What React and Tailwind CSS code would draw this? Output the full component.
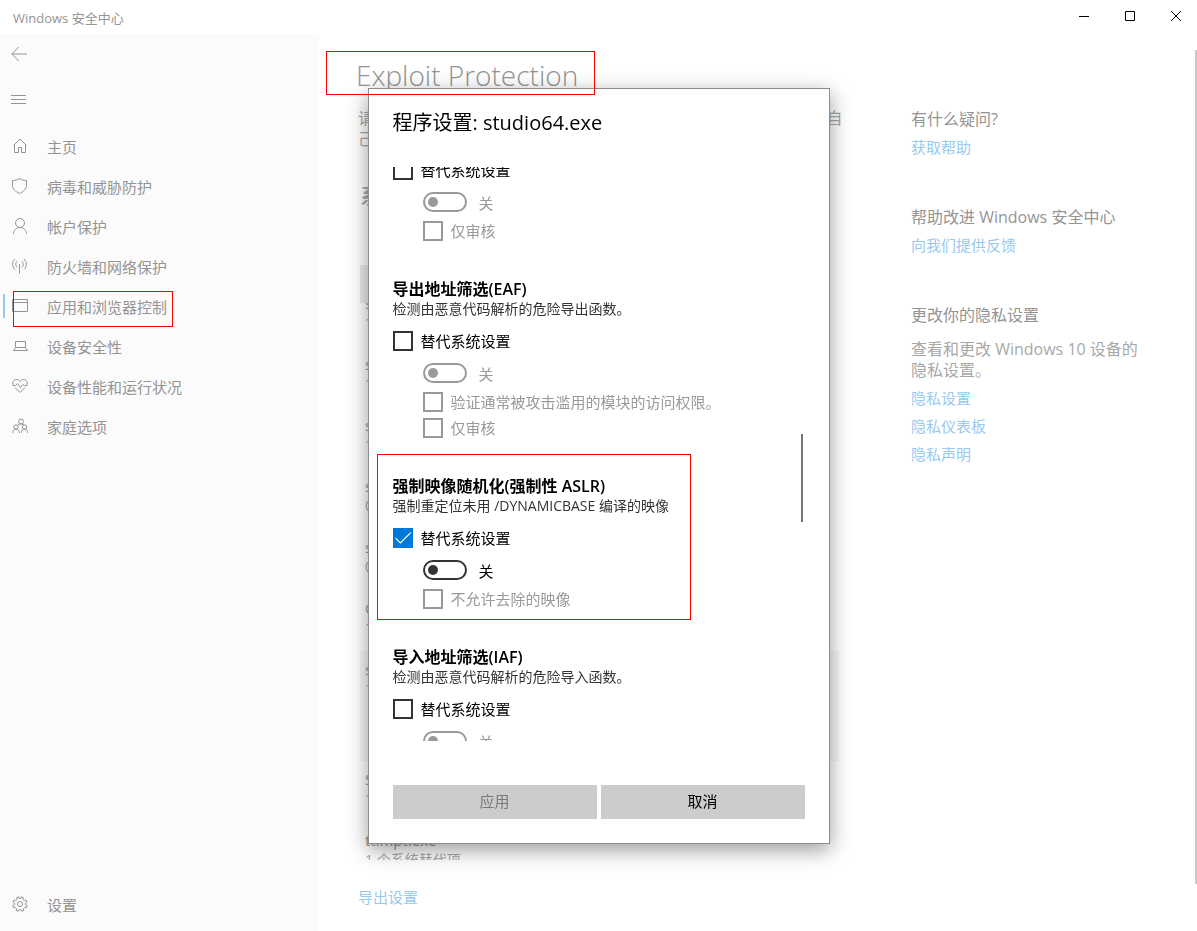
import React from "react";

const latin = "font-['Open_Sans','Noto_Sans_CJK_SC',sans-serif]";

function Icon({ children }) {
  return (
    <svg viewBox="0 0 16 16" className="size-4 shrink-0" fill="none" stroke="currentColor" aria-hidden="true">
      {children}
    </svg>
  );
}

const icons = {
  home: (
    <Icon>
      <path d="M1.5 7.5 8 1l6.500 6.500M2.500 6.800V14.500H6.500V9.500H9.500V14.500H13.500V6.800" />
    </Icon>
  ),
  shield: (
    <Icon>
      <path d="M7.500 .5C5.500 2 3.500 2.500 .5 2.500V7.500C.5 11 3.500 13.500 7.500 15.500 11.500 13.500 14.500 11 14.500 7.500V2.500C11.500 2.500 9.500 2 7.500 .5Z" />
    </Icon>
  ),
  person: (
    <Icon>
      <circle cx="8" cy="5" r="4.500" />
      <path d="M1.500 16C1.500 12 4.500 9.500 8 9.500S14.500 12 14.500 16" />
    </Icon>
  ),
  signal: (
    <Icon>
      <path d="M7.500 6V15.500M3 1C-.2 4 -.2 8.500 3 11.500M12 1C15.200 4 15.200 8.500 12 11.500M5.300 3C3.200 5 3.200 7.500 5.300 9.500M9.700 3C11.800 5 11.800 7.500 9.700 9.500" />
    </Icon>
  ),
  window: (
    <Icon>
      <path d="M.5 1.500H15.500V13.500H.5ZM.5 4.500H15.500" />
    </Icon>
  ),
  laptop: (
    <Icon>
      <path d="M3.500 3.500H13.500V9.500H3.500ZM3.500 9.500 1.500 12.500H15.500L13.500 9.500" />
    </Icon>
  ),
  heart: (
    <Icon>
      <path d="M1.300 7.500C-.5 4 2 1.500 4.500 1.500 6.300 1.500 7.500 2.500 8 3.500 8.500 2.500 9.700 1.500 11.500 1.500 14 1.500 16.500 4 14.700 7.500M3 9.500 8 14.500 13 9.500M.8 7.500H3.500L5.500 5.500 8.500 9.500 11 6.500 12.500 7.500H15.200" />
    </Icon>
  ),
  family: (
    <Icon>
      <circle cx="9" cy="3.500" r="2.500" />
      <circle cx="4" cy="9" r="2.200" />
      <circle cx="12.500" cy="9" r="2.200" />
      <path d="M.6 15C.8 12.500 2 11.200 4 11.200S7.200 12.500 7.400 15M9.300 15C9.500 12.500 10.500 11.200 12.500 11.200S15.600 12.500 15.700 15M5.500 7.500C6 6.500 7.500 6 9 6S11.500 6.500 12 7" />
    </Icon>
  ),
  gear: (
    <Icon>
      <circle cx="8" cy="8" r="2.500" />
      <path d="M6.800 .8 7.200 2.500H8.800L9.200 .8 11.300 1.600 10.800 3.300 12.300 4.700 14 3.900 15.100 6 13.600 7V8.800L15.200 9.700 14.300 11.900 12.600 11.500 11.400 12.700 11.900 14.400 9.800 15.300 8.800 13.700H7.200L6.200 15.300 4.100 14.400 4.600 12.700 3.400 11.500 1.700 11.900 .8 9.700 2.400 8.800V7L.9 6 2 3.900 3.700 4.700 5.200 3.300 4.700 1.600Z" />
    </Icon>
  ),
};

const navItems = [
  ["home", "主页"],
  ["shield", "病毒和威胁防护"],
  ["person", "帐户保护"],
  ["signal", "防火墙和网络保护"],
  ["window", "应用和浏览器控制"],
  ["laptop", "设备安全性"],
  ["heart", "设备性能和运行状况"],
  ["family", "家庭选项"],
];

function NavLink({ icon, label, active }) {
  return (
    <a
      href="#"
      aria-current={active ? "page" : undefined}
      className="relative flex h-10 items-center gap-[19px] pl-3 text-[15px] text-[#949494]"
    >
      {active && <span className="absolute left-[3px] h-6 w-0.5 bg-[#99c9ef]" />}
      {icons[icon]}
      <span className="pt-0.5">{label}</span>
      {active && <span className="absolute top-[5px] left-[13px] h-9 w-40 border border-[#f00]" />}
    </a>
  );
}

function Sidebar() {
  return (
    <aside className="flex w-[319px] shrink-0 flex-col bg-[#fbfbfb] text-[#949494]">
      <button aria-label="返回" className="flex h-10 items-center pl-[11px]">
        <svg viewBox="0 0 16 16" className="size-4" fill="none" stroke="currentColor">
          <path d="M.8 8H16M7.800 1 .8 8l7 7" />
        </svg>
      </button>
      <button aria-label="打开导航" className="mt-1 flex h-11 items-center pl-[11px]">
        <svg viewBox="0 0 15 10" className="h-2.5 w-[15px]" stroke="currentColor">
          <path d="M0 .5H15M0 4.500H15M0 8.500H15" />
        </svg>
      </button>
      <nav className="mt-1 flex flex-1 flex-col">
        {navItems.map(([icon, label]) => (
          <NavLink key={icon} icon={icon} label={label} active={icon === "window"} />
        ))}
        <div className="mt-auto pb-[7px]">
          <NavLink icon="gear" label="设置" />
        </div>
      </nav>
    </aside>
  );
}

const programs = [
  ["sdxhelper.exe", "1 个系统替代项"],
  ["setup.exe", "1 个系统替代项"],
  ["spoolsv.exe", "1 个系统替代项"],
  ["splwow64.exe", "0 个系统替代项"],
  ["svchost.exe", "0 个系统替代项"],
  ["Outlook.exe", "1 个系统替代项"],
  ["studio64.exe", "1 个系统替代项"],
  ["SystemSettings.exe", "1 个系统替代项"],
  ["ttimpt.exe", "1 个系统替代项"],
];

function ProgramList() {
  return (
    <div className="mr-1 ml-0.5 h-[557px] overflow-hidden">
      <ul className="-mt-[18px]">
        {programs.map(([name, note]) => (
          <li
            key={name}
            className={
              name === "studio64.exe"
                ? "h-[110px] bg-[#f7f7f7] px-[5px] pt-2 text-[#949494]"
                : "h-[61px] px-[5px] pt-2 text-[#949494]"
            }
          >
            <p className="text-[15px] leading-5">{name}</p>
            <p className="text-[14px] leading-5 text-[#a8a8a8]">{note}</p>
          </li>
        ))}
      </ul>
    </div>
  );
}

function Content() {
  return (
    <section className="max-w-[485px] flex-1">
      <h1 className="relative -ml-0.5 flex h-[59px] items-end text-[28px] leading-9 font-light text-[#949494]">
        Exploit Protection
        <span className="absolute -left-[30px] top-[17px] z-20 h-11 w-[269px] border border-[#f00]" />
      </h1>
      <p className="mt-[15px] text-[16px] leading-[21px] whitespace-nowrap text-[#a8a8a8]">
        请查看 Windows和程序的 Exploit Protection 设置。你可根据需要自
        <br />
        己自定义设置。
      </p>
      <div className="mx-0.5 mt-7 flex gap-6 text-[22px] leading-[34px] font-medium text-[#a8a8a8]">
        <button>系统设置</button>
        <button>程序设置</button>
      </div>
      <button className="mx-0.5 mt-[53px] block h-[38px] w-[230px] bg-[#ebebeb] text-[15px] text-[#949494]">
        + 添加程序进行自定义
      </button>
      <ProgramList />
      <a href="#" className="mt-[27px] inline-block text-[15px] leading-5 text-[#99c9ef]">
        导出设置
      </a>
    </section>
  );
}

function HelpGroup({ title, note, links }) {
  return (
    <div>
      <h2 className="text-[16px] leading-[21px] text-[#949494]">{title}</h2>
      {note && <p className="mt-[13px] text-[16px] leading-[21px] text-[#a8a8a8]">{note}</p>}
      <ul className="mt-[7px] flex flex-col gap-2 text-[15px] leading-5 text-[#99c9ef]">
        {links.map((link) => (
          <li key={link}>
            <a href="#">{link}</a>
          </li>
        ))}
      </ul>
    </div>
  );
}

function HelpPane() {
  return (
    <aside className="flex w-[240px] shrink-0 flex-col gap-[50px] pt-[75px]">
      <HelpGroup title="有什么疑问?" links={["获取帮助"]} />
      <HelpGroup title="帮助改进 Windows 安全中心" links={["向我们提供反馈"]} />
      <HelpGroup
        title="更改你的隐私设置"
        note="查看和更改 Windows 10 设备的隐私设置。"
        links={["隐私设置", "隐私仪表板", "隐私声明"]}
      />
    </aside>
  );
}

function Check({ label, checked, disabled }) {
  return (
    <label
      className={
        disabled ? "flex h-5 items-center gap-2 text-[#999]" : "flex h-5 items-center gap-2 text-black"
      }
    >
      <span className="grid size-5 shrink-0">
        <input
          type="checkbox"
          defaultChecked={checked}
          disabled={disabled}
          className="peer col-start-1 row-start-1 size-5 appearance-none border-2 border-[#333] bg-white checked:border-[#0078d7] checked:bg-[#0078d7] disabled:border-[#999]"
        />
        <svg
          viewBox="0 0 20 20"
          className="pointer-events-none invisible col-start-1 row-start-1 size-5 peer-checked:visible"
          fill="none"
          stroke="#fff"
          strokeWidth="1.200"
        >
          <path d="M2.500 10.200 7.300 15 17.800 4.600" />
        </svg>
      </span>
      <span className="text-[15px] leading-5">{label}</span>
    </label>
  );
}

function Toggle({ disabled }) {
  return (
    <label
      className={
        disabled ? "flex h-5 items-center gap-3 text-[#999]" : "flex h-5 items-center gap-3 text-black"
      }
    >
      <input
        type="checkbox"
        role="switch"
        disabled={disabled}
        className="flex h-5 w-11 appearance-none items-center rounded-full border-2 border-[#333] pl-[3px] before:size-2.5 before:rounded-full before:bg-[#333] disabled:border-[#999] disabled:before:bg-[#999]"
      />
      <span className="pt-0.5 text-[15px] leading-5">关</span>
    </label>
  );
}

function Mitigation({ title, note, enabled, options, highlighted }) {
  return (
    <section className="relative">
      {title && (
        <div className="mb-3">
          <h3 className="text-[16px] leading-5 font-semibold text-black">{title}</h3>
          <p className="text-[14px] leading-5 text-[#333]">{note}</p>
        </div>
      )}
      <Check label="替代系统设置" checked={enabled} />
      <div className="mt-3 ml-[30px]">
        <Toggle disabled={!enabled} />
        <div className="mt-[9px] flex flex-col gap-1.5">
          {options.map((option) => (
            <Check key={option} label={option} disabled />
          ))}
        </div>
      </div>
      {highlighted && (
        <span className="pointer-events-none absolute -top-[22px] -left-4 h-[166px] w-[314px] border border-[#f00]" />
      )}
    </section>
  );
}

function ProgramDialog() {
  return (
    <div className="fixed inset-0 z-10 flex items-center justify-center">
      <div
        role="dialog"
        aria-labelledby="dialog-title"
        className="flex w-[462px] flex-col border border-[#8c8c8c] bg-white px-6 pb-6 shadow-[0_6px_20px_rgba(0,0,0,0.4)]"
      >
        <h2 id="dialog-title" className="mt-5 text-[20px] leading-7 text-black">
          程序设置: studio64.exe
        </h2>
        <div className="-mx-4 mt-[30px] flex h-[574px] overflow-hidden px-4">
          <div className="-mt-[7px] flex flex-1 flex-col gap-[38px]">
            <Mitigation options={["仅审核"]} />
            <Mitigation
              title="导出地址筛选(EAF)"
              note="检测由恶意代码解析的危险导出函数。"
              options={["验证通常被攻击滥用的模块的访问权限。", "仅审核"]}
            />
            <Mitigation
              title="强制映像随机化(强制性 ASLR)"
              note="强制重定位未用 /DYNAMICBASE 编译的映像"
              enabled
              highlighted
              options={["不允许去除的映像"]}
            />
            <Mitigation
              title="导入地址筛选(IAF)"
              note="检测由恶意代码解析的危险导入函数。"
              options={["仅审核"]}
            />
          </div>
          <div className="mt-[267px] mr-0.5 h-[88px] w-0.5 shrink-0 bg-[#767676]" />
        </div>
        <div className="mt-11 grid grid-cols-2 gap-1 text-[15px]">
          <button disabled className="h-[34px] bg-[#ccc] text-[#7a7a7a]">
            应用
          </button>
          <button className="h-[34px] bg-[#ccc] text-black">取消</button>
        </div>
      </div>
    </div>
  );
}

function TitleBar() {
  return (
    <header className="flex h-[34px] shrink-0 justify-between pl-[13px]">
      <span className="pt-2 text-[13px] leading-5 text-[#949494]">Windows 安全中心</span>
      <div className="flex h-8">
        <button aria-label="最小化" className="grid w-[46px] place-items-center">
          <svg viewBox="0 0 10 10" className="size-2.5" stroke="#000">
            <path d="M0 5.500H10" />
          </svg>
        </button>
        <button aria-label="最大化" className="grid w-[46px] place-items-center">
          <svg viewBox="0 0 10 10" className="size-2.5" fill="none" stroke="#000">
            <path d="M.5 .5H9.500V9.500H.5Z" />
          </svg>
        </button>
        <button aria-label="关闭" className="grid w-11 place-items-center pl-0.5">
          <svg viewBox="0 0 10 10" className="size-2.5" stroke="#000">
            <path d="M0 0 10 10M10 0 0 10" />
          </svg>
        </button>
      </div>
    </header>
  );
}

export default function App() {
  return (
    <div className={`flex min-h-screen flex-col bg-white ${latin}`}>
      <TitleBar />
      <div className="flex flex-1">
        <Sidebar />
        <main className="flex flex-1 gap-[68px] pl-[39px]">
          <Content />
          <HelpPane />
        </main>
        <div className="mt-4 mb-[47px] w-0.5 shrink-0 bg-[#c8c8c8]" />
      </div>
      <ProgramDialog />
    </div>
  );
}
